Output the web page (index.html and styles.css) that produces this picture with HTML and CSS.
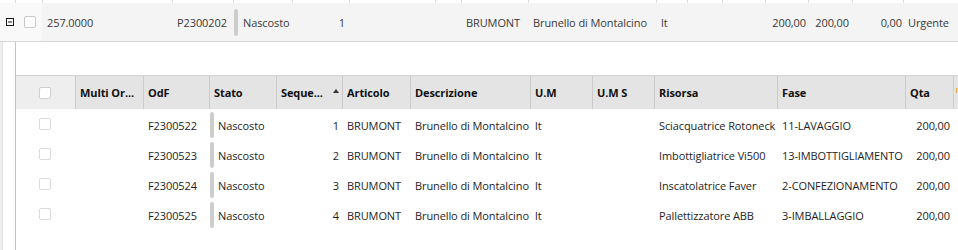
FILE: index.html
```html
<!DOCTYPE html>
<html lang="it">
<head>
<meta charset="utf-8">
<title>Ordini</title>
<link rel="stylesheet" href="styles.css">
</head>
<body>
<div class="page">
  <div class="mgrid topstrip">
    <div></div><div></div><div></div><div></div><div></div><div></div><div></div><div></div>
    <div></div><div></div><div></div><div></div><div></div><div></div><div></div><div></div><div></div>
  </div>
  <div class="mgrid master">
    <div class="mc expander">
      <svg width="8" height="8" viewBox="0 0 8 8"><rect x="0.5" y="0.5" width="7" height="7" fill="none" stroke="#1a1a1a" stroke-width="1"/><line x1="2" y1="4" x2="6" y2="4" stroke="#1a1a1a" stroke-width="1"/></svg>
    </div>
    <div class="mc light"><span class="cb"></span></div>
    <div class="mc">257.0000</div>
    <div class="mc">P2300202</div>
    <div class="mc status"><span class="sbar tall"></span>Nascosto</div>
    <div class="mc right">1</div>
    <div class="mc"></div>
    <div class="mc"></div>
    <div class="mc">BRUMONT</div>
    <div class="mc">Brunello di Montalcino</div>
    <div class="mc">lt</div>
    <div class="mc"></div>
    <div class="mc"></div>
    <div class="mc right r2">200,00</div>
    <div class="mc right r3">200,00</div>
    <div class="mc right r1">0,00</div>
    <div class="mc">Urgente</div>
  </div>
  <div class="detail-wrap">
    <div class="gutter"></div>
    <div class="detail">
      <div class="toolbar"></div>
      <div class="dgrid dhead">
        <div class="hc first"><span class="cb hcb"></span></div>
        <div class="hc">Multi Or...</div>
        <div class="hc">OdF</div>
        <div class="hc">Stato</div>
        <div class="hc sort">Seque...<span class="arrow"></span></div>
        <div class="hc">Articolo</div>
        <div class="hc">Descrizione</div>
        <div class="hc">U.M</div>
        <div class="hc">U.M S</div>
        <div class="hc">Risorsa</div>
        <div class="hc">Fase</div>
        <div class="hc">Qta</div>
        <div class="hc tail"><span class="orange"></span></div>
      </div>

      <div class="dgrid drow">
        <div class="dc first"><span class="cb dcb"></span></div>
        <div class="dc"></div>
        <div class="dc">F2300522</div>
        <div class="dc status"><span class="sbar"></span>Nascosto</div>
        <div class="dc right">1</div>
        <div class="dc">BRUMONT</div>
        <div class="dc">Brunello di Montalcino</div>
        <div class="dc">lt</div>
        <div class="dc"></div>
        <div class="dc">Sciacquatrice Rotoneck</div>
        <div class="dc">11-LAVAGGIO</div>
        <div class="dc right">200,00</div>
        <div class="dc"></div>
      </div>
      <div class="dgrid drow">
        <div class="dc first"><span class="cb dcb"></span></div>
        <div class="dc"></div>
        <div class="dc">F2300523</div>
        <div class="dc status"><span class="sbar"></span>Nascosto</div>
        <div class="dc right">2</div>
        <div class="dc">BRUMONT</div>
        <div class="dc">Brunello di Montalcino</div>
        <div class="dc">lt</div>
        <div class="dc"></div>
        <div class="dc">Imbottigliatrice Vi500</div>
        <div class="dc">13-IMBOTTIGLIAMENTO</div>
        <div class="dc right">200,00</div>
        <div class="dc"></div>
      </div>
      <div class="dgrid drow">
        <div class="dc first"><span class="cb dcb"></span></div>
        <div class="dc"></div>
        <div class="dc">F2300524</div>
        <div class="dc status"><span class="sbar"></span>Nascosto</div>
        <div class="dc right">3</div>
        <div class="dc">BRUMONT</div>
        <div class="dc">Brunello di Montalcino</div>
        <div class="dc">lt</div>
        <div class="dc"></div>
        <div class="dc">Inscatolatrice Faver</div>
        <div class="dc">2-CONFEZIONAMENTO</div>
        <div class="dc right">200,00</div>
        <div class="dc"></div>
      </div>
      <div class="dgrid drow">
        <div class="dc first"><span class="cb dcb"></span></div>
        <div class="dc"></div>
        <div class="dc">F2300525</div>
        <div class="dc status"><span class="sbar"></span>Nascosto</div>
        <div class="dc right">4</div>
        <div class="dc">BRUMONT</div>
        <div class="dc">Brunello di Montalcino</div>
        <div class="dc">lt</div>
        <div class="dc"></div>
        <div class="dc">Pallettizzatore ABB</div>
        <div class="dc">3-IMBALLAGGIO</div>
        <div class="dc right">200,00</div>
        <div class="dc"></div>
      </div>
    </div>
  </div>
</div>
</body>
</html>
```

FILE: styles.css
```css
* { box-sizing: border-box; }
html, body { margin: 0; padding: 0; background: #ffffff; }
body {
  font-family: "Open Sans", "Noto Sans", sans-serif;
  font-size: 11px;
  letter-spacing: -0.1px;
  color: #222;
  width: 958px;
  height: 250px;
  overflow: hidden;
}
.page { width: 958px; }

.mgrid {
  display: grid;
  grid-template-columns: 15px 27px 130px 61px 59px 57px 86px 26px 67px 128px 31px 35px 43px 43px 44px 51px 55px;
}
.topstrip { height: 3px; background: #fff; }
.topstrip > div + div { border-left: 1px solid #dcdcdc; }

.master {
  height: 39px;
  background: #f4f4f4;
  border-bottom: 1px solid #d6d6d6;
  color: #3a3a3a;
}
.mc {
  display: flex;
  align-items: center;
  padding: 0 0 0 5px;
  white-space: nowrap;
  overflow: hidden;
}
.mc.right { justify-content: flex-end; padding: 0 4px 0 0; }
.mc.r1 { padding-right: 1px; }
.mc.r2 { padding-right: 2px; }
.mc.r3 { padding-right: 3px; }
.mc.light { background: #f9f9f9; padding: 0 0 0 9px; }
.expander { background: #f9f9f9; padding: 0 0 1px 6px; }
.expander svg { display: block; }
.mc.status, .dc.status { padding-left: 1px; }

.cb {
  display: inline-block;
  width: 12px;
  height: 12px;
  border: 1px solid #c9c9c9;
  border-radius: 2px;
  background: #fff;
}
.sbar {
  display: inline-block;
  width: 4px;
  height: 26px;
  border-radius: 2px;
  background: #cdcdcd;
  margin-right: 4px;
  flex: none;
}
.sbar.tall { height: 27px; margin-right: 5px; }

.detail-wrap { display: flex; height: 210px; }
.gutter {
  width: 15px;
  flex: none;
  background: linear-gradient(to right, #efefef 0, #efefef 2px, #e0e0e0 2px, #e0e0e0 3px, #ffffff 3px);
}
.detail {
  flex: 1;
  border-left: 1px solid #c3c3d4;
  min-width: 0;
}
.toolbar { height: 33px; background: #fff; }

.dgrid {
  display: grid;
  grid-template-columns: 59px 68px 66px 67px 66px 68px 120px 62px 62px 123px 128px 48px 4px;
}
.dhead {
  height: 34px;
  background: #e4e4e4;
  border-top: 1px solid #d3d3d3;
  font-weight: 700;
  color: #111;
}
.hc {
  display: flex;
  align-items: center;
  padding: 0 0 1px 4px;
  white-space: nowrap;
  overflow: hidden;
  border-left: 1px solid #cbcbcb;
}
.hc.first {
  border-left: none;
  background: #eeeeee;
  justify-content: center;
  padding: 0 1px 0 0;
}
.hcb { border-color: #cfcfcf; }
.hc.sort { position: relative; }
.arrow {
  margin-left: 10px;
  width: 0;
  height: 0;
  border-left: 3px solid transparent;
  border-right: 3px solid transparent;
  border-bottom: 4px solid #333;
  margin-bottom: 2px;
}
.hc.tail { padding: 0 0 4px 2px; }
.orange { display: block; width: 2px; height: 5px; background: #f0a33a; }

.drow { height: 30px; }
.dc {
  display: flex;
  align-items: center;
  padding: 0 0 0 5px;
  white-space: nowrap;
  overflow: hidden;
  color: #1e1e1e;
}
.dc.first { justify-content: center; padding: 0 1px 2px 0; }
.dcb { border-color: #dadada; }
.dc.right { justify-content: flex-end; padding: 0 3px 0 0; }
.dhead + .drow { margin-top: 1px; }
```
